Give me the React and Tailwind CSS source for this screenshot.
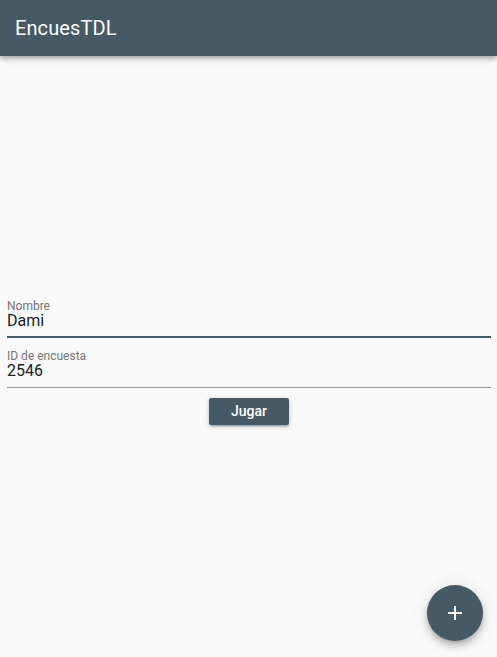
import React from "react";

export default function App() {
  return (
    <div
      className="relative min-h-screen bg-[#fafafa]"
      style={{ fontFamily: "Roboto, 'Noto Sans', sans-serif" }}
    >
      <header className="h-14 bg-[#455a64] flex items-center px-[15px] shadow-[0_2px_4px_-1px_rgba(0,0,0,0.2),0_4px_5px_0_rgba(0,0,0,0.14),0_1px_10px_0_rgba(0,0,0,0.12)] relative z-10">
        <span className="text-white text-[20px] font-normal tracking-[0.1px]">EncuesTDL</span>
      </header>

      <main className="pl-[7px] pr-[6px] pt-[244px] flex flex-col">
        <div className="flex flex-col border-b-2 border-[#455a64] pb-[7px]">
          <span className="text-[12px] leading-[13px] text-[#757575]">Nombre</span>
          <span className="text-[16px] leading-[16px] text-[#212121]">Dami</span>
        </div>
        <div className="flex flex-col border-b border-[#949494] pb-[8px] mt-[12px]">
          <span className="text-[12px] leading-[13px] text-[#757575]">ID de encuesta</span>
          <span className="text-[16px] leading-[16px] text-[#212121]">2546</span>
        </div>
        <div className="flex justify-center mt-[10px]">
          <button className="w-[80px] h-[27px] bg-[#455a64] text-white text-[14px] font-medium rounded-[2px] shadow-[0_2px_2px_0_rgba(0,0,0,0.14),0_3px_1px_-2px_rgba(0,0,0,0.12),0_1px_5px_0_rgba(0,0,0,0.2)] leading-[27px]">
            Jugar
          </button>
        </div>
      </main>

      <button className="fixed right-[14px] bottom-[16px] w-14 h-14 rounded-full bg-[#455a64] flex items-center justify-center shadow-[0_3px_5px_-1px_rgba(0,0,0,0.2),0_6px_10px_0_rgba(0,0,0,0.14),0_1px_18px_0_rgba(0,0,0,0.12)]">
        <svg width="24" height="24" viewBox="0 0 24 24" fill="white">
          <path d="M19 13h-6v6h-2v-6H5v-2h6V5h2v6h6v2z" />
        </svg>
      </button>
    </div>
  );
}
